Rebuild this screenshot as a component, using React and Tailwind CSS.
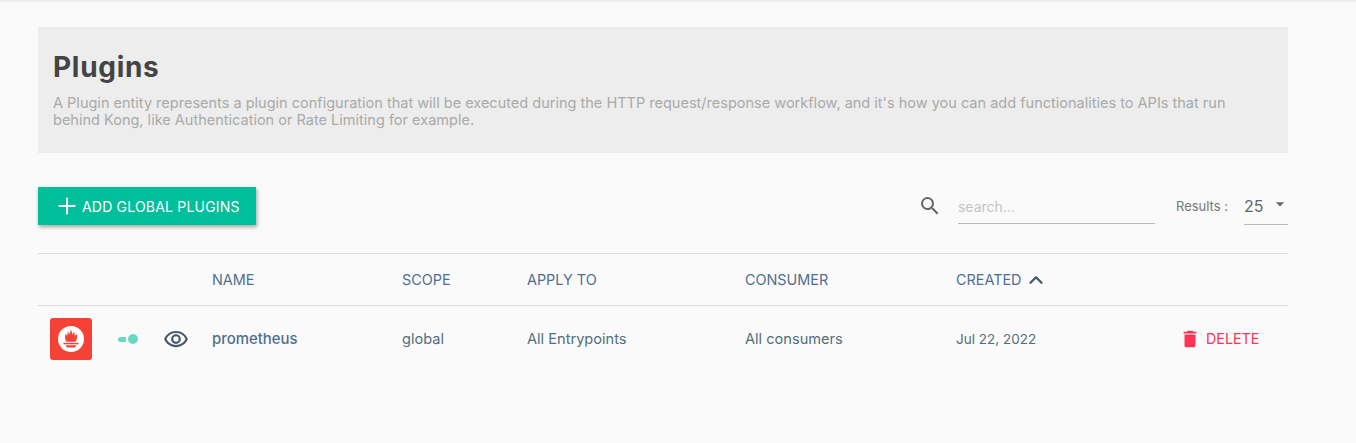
import React from 'react';
import { Plus, ChevronUp } from 'lucide-react';
import { MdSearch, MdDelete, MdArrowDropDown, MdOutlineRemoveRedEye } from 'react-icons/md';

const FONT = 'font-[Inter,"Noto_Sans",sans-serif]';

function PrometheusLogo() {
  return (
    <div className="flex h-[42px] w-[42px] items-center justify-center rounded-[3px] bg-[#f44336]">
      <svg width="26" height="26" viewBox="0 0 26 26">
        <circle cx="13" cy="13" r="13" fill="#fff" />
        {/* flame */}
        <path
          d="M13 3.500L14.500 8.500 16.200 5.500 16.800 9.800 18.600 8C19.300 11 19.200 13.500 17.500 15.800H8.500C6.800 13.500 6.700 11 7.400 8L9.200 9.800 9.800 5.500 11.500 8.500z"
          fill="#f44336"
        />
        <rect x="5.500" y="16.800" width="15" height="1.500" fill="#f44336" />
        <path d="M7.500 19.200h11l-1.500 2.300H9z" fill="#f44336" />
      </svg>
    </div>
  );
}

export default function App() {
  return (
    <div className={`${FONT} min-h-[443px] border-t-2 border-[#eeeeee] bg-[#fafafa]`}>
      <div className="ml-[38px] w-[1250px] pt-[25px]">
        <div className="h-[126px] bg-[#ededed] px-[15px] pt-[24px]">
          <h1 className="text-[28px] leading-[32px] font-bold tracking-[0.7px] text-[#444444]">Plugins</h1>
          <p className="mt-[12px] text-[14.530px] leading-[17px] text-[#aaaaaa]">
            A Plugin entity represents a plugin configuration that will be executed during the HTTP request/response workflow, and it's how you can add functionalities to APIs that run
            <br />
            behind Kong, like Authentication or Rate Limiting for example.
          </p>
        </div>

        <div className="mt-[34px] flex h-[38px] items-center justify-between">
          <button className="flex h-[38px] w-[218px] items-center gap-[2px] bg-[#00bf9a] pl-[16px] text-[14px] font-normal tracking-[0.2px] text-white shadow-[1px_2px_4px_rgba(0,0,0,0.35)]">
            <Plus size={26} strokeWidth={1.850} />
            <span>ADD GLOBAL PLUGINS</span>
          </button>
          <div className="flex items-center">
            <MdSearch size={24} className="text-[#666666]" />
            <div className="ml-[16px] flex h-[36px] w-[197px] items-center border-b-[1.500px] border-[#bbbbbb] pt-[2px] text-[14px] text-[#c4c4c4]">search...</div>
            <span className="ml-[21px] pt-[2px] text-[13px] text-[#777777]">Results :</span>
            <div className="ml-[16px] flex h-[37px] w-[44px] items-center justify-between border-b-[1.500px] border-[#bbbbbb] text-[16px] text-[#666666]">
              <span>25</span>
              <MdArrowDropDown size={20} className="mt-[-3px] mr-[-2px] text-[#666666]" />
            </div>
          </div>
        </div>

        <div className="mt-[28px] border-t border-[#dddddd]">
          <div className="grid h-[52px] grid-cols-[174px_190px_125px_218px_211px_1fr] items-center border-b border-[#dddddd] text-[14.400px] font-normal text-[#4f6f8f]">
            <span />
            <span>NAME</span>
            <span>SCOPE</span>
            <span>APPLY TO</span>
            <span>CONSUMER</span>
            <span className="flex items-center gap-[4px]">
              CREATED <ChevronUp size={22} strokeWidth={2.500} className="text-[#455a64]" />
            </span>
          </div>
          <div className="grid h-[66px] grid-cols-[174px_190px_125px_218px_211px_226px_1fr] items-center text-[14.600px] text-[#546e7a]">
            <div className="flex items-center pl-[12px]">
              <PrometheusLogo />
              <div className="ml-[26px] flex items-center">
                <span className="h-[5px] w-[8px] rounded-l-full bg-[#69d9c3]" />
                <span className="ml-[2px] h-[10px] w-[10px] rounded-full bg-[#69d9c3]" />
              </div>
              <MdOutlineRemoveRedEye size={26} className="ml-[25px] text-[#455a64]" />
            </div>
            <span className="pt-px text-[14.900px] font-medium text-[#4f6f8f]">prometheus</span>
            <span className="pt-px">global</span>
            <span className="pt-px">All Entrypoints</span>
            <span className="pt-px">All consumers</span>
            <span className="text-[13.500px]">Jul 22, 2022</span>
            <button className="flex items-center gap-[5px] text-[14.300px] font-normal text-[#ff3355]">
              <MdDelete size={22} className="ml-[-3px]" />
              DELETE
            </button>
          </div>
        </div>
      </div>
    </div>
  );
}
